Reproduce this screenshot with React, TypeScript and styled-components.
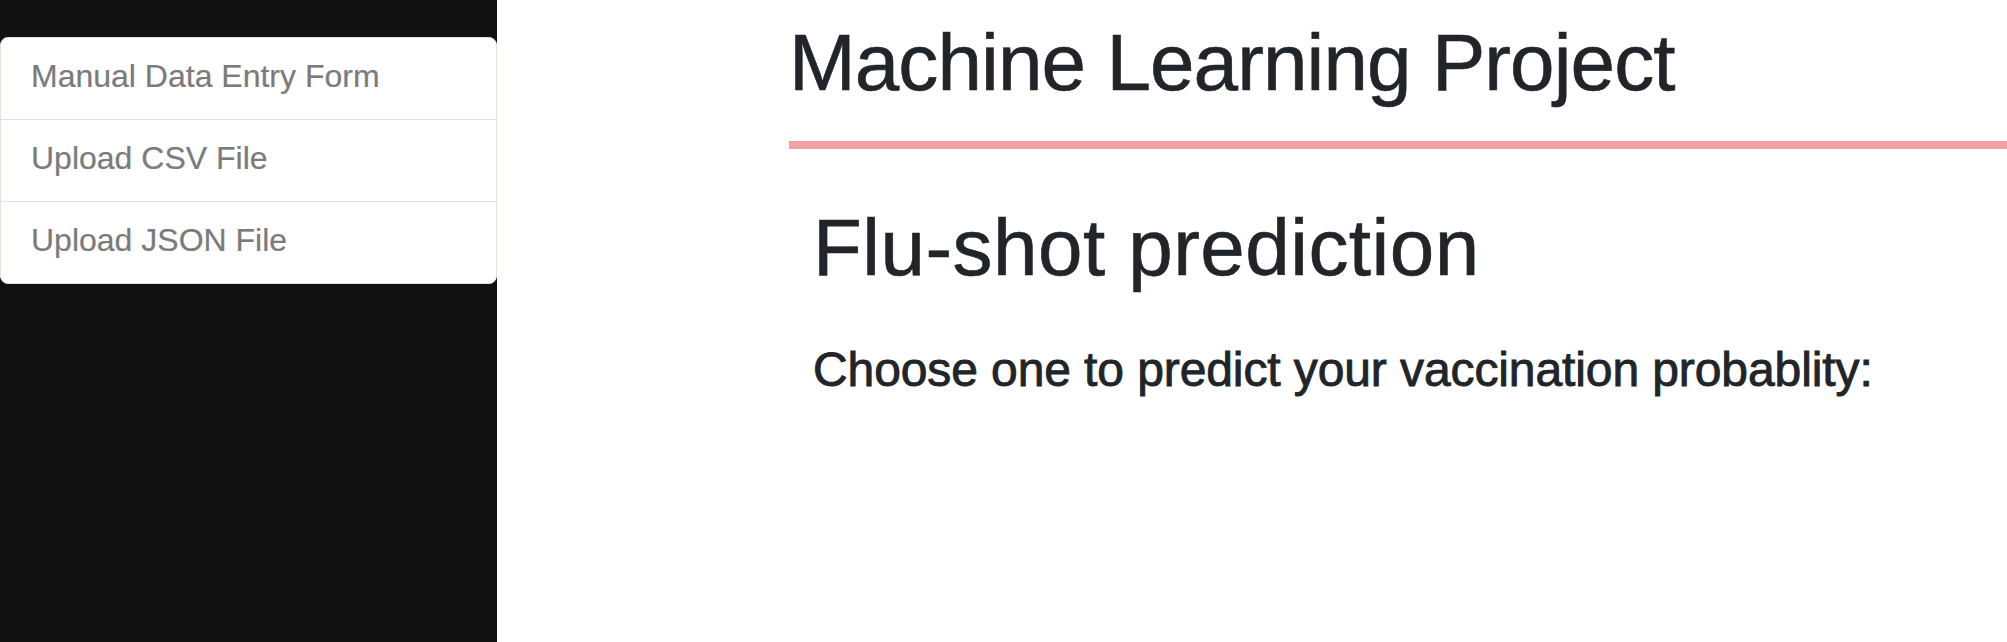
import React from "react";
import styled, { createGlobalStyle } from "styled-components";

const GlobalStyle = createGlobalStyle`
  html, body {
    margin: 0;
    padding: 0;
    background: #ffffff;
  }
  body {
    font-family: "Liberation Sans", Arial, sans-serif;
    color: #212529;
  }
  #root {
    min-height: 642px;
  }
`;

const Page = styled.div`
  display: grid;
  grid-template-columns: 497px 1fr;
  min-height: 642px;
  overflow: hidden;
`;

const Sidebar = styled.aside`
  background: #111111;
  padding-top: 37px;
`;

const NavList = styled.nav`
  display: flex;
  flex-direction: column;
  background: #ffffff;
  border: 1px solid #dee2e6;
  border-radius: 8px;
  overflow: hidden;
`;

const NavItem = styled.a<{ $last?: boolean }>`
  display: block;
  padding: 14px 30px 19px 30px;
  font-size: 32px;
  line-height: 48px;
  color: #7b7b7b;
  text-decoration: none;
  border-bottom: ${(p) => (p.$last ? "none" : "1px solid #dee2e6")};
  -webkit-text-stroke: 0.2px #7b7b7b;
  cursor: pointer;
`;

const Main = styled.main`
  padding: 15px 0 0 292px;
  display: flex;
  flex-direction: column;
`;

const Title = styled.h1`
  margin: 0;
  font-size: 80px;
  line-height: 96px;
  font-weight: 400;
  letter-spacing: -0.9px;
  color: #212529;
  -webkit-text-stroke: 0.6px #212529;
`;

const Divider = styled.div`
  margin-top: 30px;
  height: 8px;
  background: #f1a0a5;
`;

const Section = styled.section`
  padding-left: 24px;
  display: flex;
  flex-direction: column;
`;

const SubTitle = styled.h1`
  margin: 51px 0 0 0;
  font-size: 80px;
  line-height: 96px;
  font-weight: 400;
  letter-spacing: 0.45px;
  color: #212529;
  -webkit-text-stroke: 0.6px #212529;
`;

const Prompt = styled.h4`
  margin: 45px 0 0 0;
  font-size: 48px;
  line-height: 57.6px;
  font-weight: 400;
  letter-spacing: -0.1px;
  color: #212529;
  -webkit-text-stroke: 0.9px #212529;
`;

const items = ["Manual Data Entry Form", "Upload CSV File", "Upload JSON File"];

export default function App() {
  return (
    <>
      <GlobalStyle />
      <Page>
        <Sidebar>
          <NavList>
            {items.map((label, i) => (
              <NavItem key={label} $last={i === items.length - 1}>
                {label}
              </NavItem>
            ))}
          </NavList>
        </Sidebar>
        <Main>
          <Title>Machine Learning Project</Title>
          <Divider />
          <Section>
            <SubTitle>Flu-shot prediction</SubTitle>
            <Prompt>Choose one to predict your vaccination probablity:</Prompt>
          </Section>
        </Main>
      </Page>
    </>
  );
}
